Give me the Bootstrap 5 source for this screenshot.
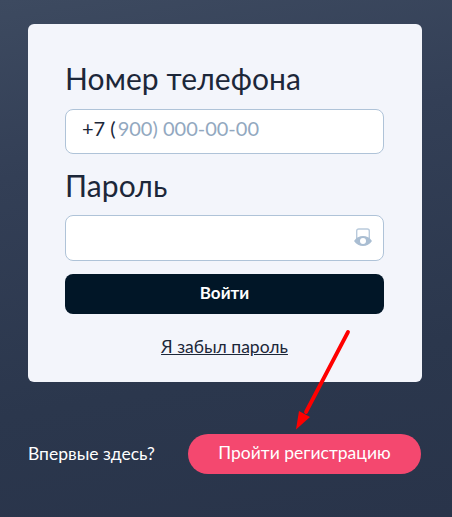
<!DOCTYPE html>
<html lang="ru">
<head>
<meta charset="utf-8">
<title>Вход</title>
<link href="https://cdn.jsdelivr.net/npm/bootstrap@5.3.0/dist/css/bootstrap.min.css" rel="stylesheet">
<style>
html,body{height:517px;overflow:hidden}
body{font-family:"Lato","Noto Sans",sans-serif;background:linear-gradient(170deg,#3d4a60 0%,#333f56 30%,#2b374d 70%,#29344a 100%);position:relative;color:#1e2a3e}
.shell{padding:24px 30px 0 28px}
.login-panel{background:#f3f5fb;border-radius:6px;height:358px;padding:34px 38px 0 37px}
.field-label{font-size:30px;line-height:40px;margin:0 0 10px;color:#1c2739;display:block;letter-spacing:.1px}
.first-label{margin-bottom:11px}
.phone-box,.pass-box{height:45px;border:1px solid #afc3d8;border-radius:8px;background:#fff;font-size:20px;padding:0 16px;display:flex;align-items:center;color:#1c2739}
.pass-box{height:46px;justify-content:flex-end;padding:0 10px 0 16px}
.phone-box{margin-bottom:11px;padding-bottom:8px}
.phone-hint{color:#92a8c0;margin-left:2px}
.enter-btn{height:40px;background:#011627;border:0;border-radius:8px;color:#fff;font-weight:700;font-size:17px;margin-top:13px;width:100%;padding-bottom:8px}
.forgot{display:block;text-align:center;font-size:17.5px;color:#1c2739;margin-top:22px;line-height:22px}
.foot-row{margin-top:52px;display:flex;align-items:center;justify-content:space-between}
.foot-q{color:#fff;font-size:17.5px}
.reg-btn{width:233px;height:40px;border-radius:20px;background:#f4486f;color:#fff;border:0;font-size:17.5px;margin-right:1px;padding-bottom:8px}
.arrow-mark{position:absolute;left:285px;top:322px;width:70px;height:115px;pointer-events:none}
</style>
</head>
<body>
<div class="shell">
  <form class="login-panel">
    <label class="field-label first-label">Номер телефона</label>
    <div class="phone-box"><span>+7 (</span><span class="phone-hint">900) 000-00-00</span></div>
    <label class="field-label">Пароль</label>
    <div class="pass-box">
      <svg width="20" height="20" viewBox="0 0 20 20" aria-hidden="true"><rect x="3.700" y="1" width="12.600" height="14" rx="2" fill="none" stroke="#b9cadc" stroke-width="1.400"/><path d="M1 13c2.400-3.200 5.400-5 9-5s6.600 1.800 9 5c-2.400 3.200-5.400 5-9 5s-6.600-1.800-9-5z" fill="#a9bdd2"/><circle cx="10" cy="13" r="3" fill="#fff"/></svg>
    </div>
    <button type="button" class="btn enter-btn">Войти</button>
    <a href="#" class="forgot">Я забыл пароль</a>
  </form>
  <div class="foot-row">
    <span class="foot-q">Впервые здесь?</span>
    <button type="button" class="btn reg-btn">Пройти регистрацию</button>
  </div>
</div>
<svg class="arrow-mark" viewBox="0 0 70 115" aria-hidden="true"><path d="M63 10 21 90" stroke="#f00" stroke-width="3.800" stroke-linecap="round" fill="none"/><path d="M11 107.500 14 89 25 95z" fill="#f00"/></svg>
<script src="https://cdn.jsdelivr.net/npm/bootstrap@5.3.0/dist/js/bootstrap.bundle.min.js"></script>
</body>
</html>
